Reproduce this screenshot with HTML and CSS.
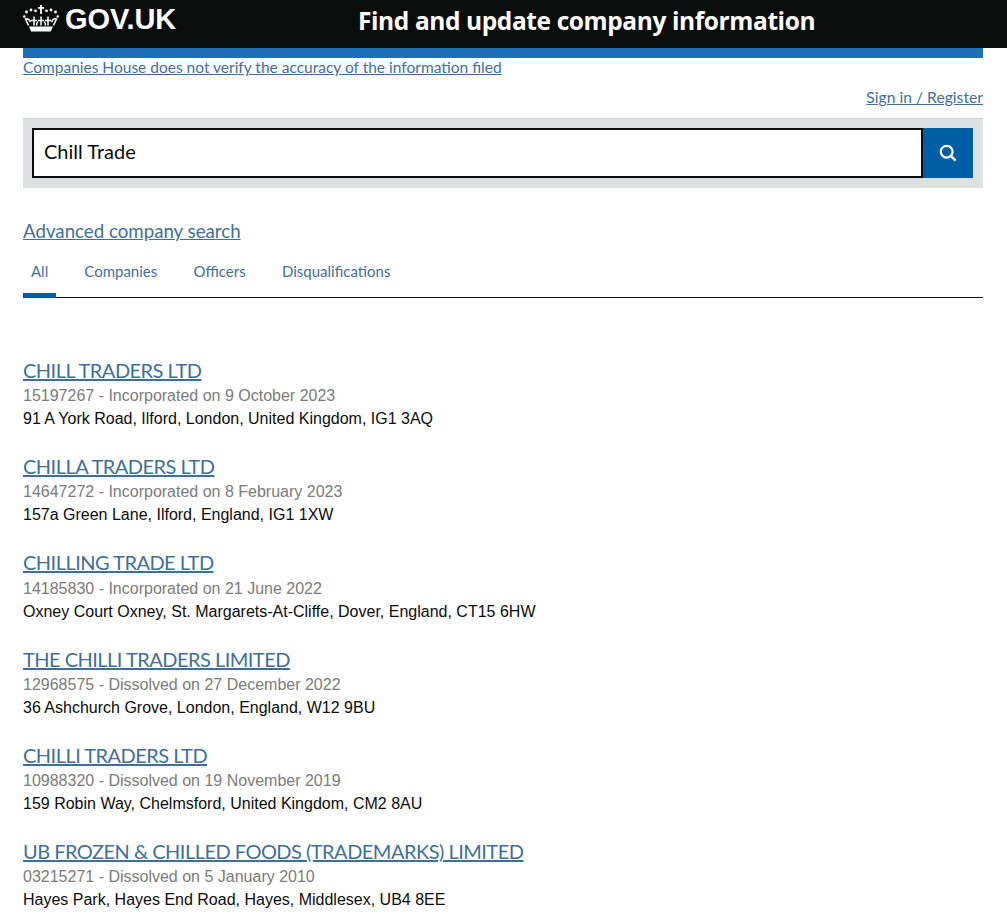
FILE: index.html
```html
<!DOCTYPE html>
<html lang="en">
<head>
<meta charset="utf-8">
<title>Find and update company information</title>
<link rel="stylesheet" href="styles.css">
</head>
<body>
<header class="masthead">
  <a class="logo" href="#">
    <svg class="crown" viewBox="0 0 36 28" width="36" height="28" aria-hidden="true">
      <g fill="#fff">
        <path d="M6 22.500h24l-2.200 5H8.200z"/>
        <rect x="17.100" y="1" width="1.800" height="9"/><rect x="15" y="3" width="6" height="1.800"/>
        <circle cx="12.500" cy="6.800" r="1.400"/><circle cx="23.500" cy="6.800" r="1.400"/>
        <circle cx="8" cy="6" r="1.400"/><circle cx="28" cy="6" r="1.400"/>
        <circle cx="3.500" cy="8" r="1.400"/><circle cx="32.500" cy="8" r="1.400"/>
        <circle cx="1.300" cy="12.500" r="1.200"/><circle cx="34.700" cy="12.500" r="1.200"/>
      </g>
      <g fill="none" stroke="#fff" stroke-width="1.500">
        <path d="M5.500 21.500 2.500 15c2-.5 4 .5 5 3M30.500 21.500l3-6.500c-2-.5-4 .5-5 3"/>
        <path d="M11 21.500v-9M25 21.500v-9M18 21.500v-9M8 16.500h6M22 16.500h6M15 16.500h6"/>
        <path d="M13.500 21.500c0-2 .5-3 1.500-4M22.500 21.500c0-2-.5-3-1.500-4"/>
      </g>
    </svg>
    <span class="logo-text">GOV.UK</span>
  </a>
  <a class="service" href="#">Find and update company information</a>
</header>

<div class="page">
  <div class="blue-bar"></div>
  <p class="notice"><a href="#">Companies House does not verify the accuracy of the information filed</a></p>
  <p class="signin"><a href="#">Sign in / Register</a></p>

  <form class="search">
    <div class="search-input">Chill Trade</div>
    <button class="search-btn" type="button" aria-label="Search">
      <svg viewBox="0 0 18 18" width="18" height="18" aria-hidden="true">
        <circle cx="7.700" cy="7.700" r="5.900" fill="none" stroke="#fff" stroke-width="2.200"/>
        <path d="M11.800 11.800l4.800 4.800" stroke="#fff" stroke-width="2.400" fill="none"/>
      </svg>
    </button>
  </form>

  <p class="advanced"><a href="#">Advanced company search</a></p>

  <nav class="tabs">
    <a class="tab active" href="#">All</a>
    <a class="tab" href="#">Companies</a>
    <a class="tab" href="#">Officers</a>
    <a class="tab" href="#">Disqualifications</a>
  </nav>

  <ul class="results">
    <li class="result">
      <h3><a href="#">CHILL TRADERS LTD</a></h3>
      <p class="meta">15197267 - Incorporated on 9 October 2023</p>
      <p class="addr">91 A York Road, Ilford, London, United Kingdom, IG1 3AQ</p>
    </li>
    <li class="result">
      <h3><a href="#">CHILLA TRADERS LTD</a></h3>
      <p class="meta">14647272 - Incorporated on 8 February 2023</p>
      <p class="addr">157a Green Lane, Ilford, England, IG1 1XW</p>
    </li>
    <li class="result">
      <h3><a href="#">CHILLING TRADE LTD</a></h3>
      <p class="meta">14185830 - Incorporated on 21 June 2022</p>
      <p class="addr">Oxney Court Oxney, St. Margarets-At-Cliffe, Dover, England, CT15 6HW</p>
    </li>
    <li class="result">
      <h3><a href="#">THE CHILLI TRADERS LIMITED</a></h3>
      <p class="meta">12968575 - Dissolved on 27 December 2022</p>
      <p class="addr">36 Ashchurch Grove, London, England, W12 9BU</p>
    </li>
    <li class="result">
      <h3><a href="#">CHILLI TRADERS LTD</a></h3>
      <p class="meta">10988320 - Dissolved on 19 November 2019</p>
      <p class="addr">159 Robin Way, Chelmsford, United Kingdom, CM2 8AU</p>
    </li>
    <li class="result">
      <h3><a href="#">UB FROZEN &amp; CHILLED FOODS (TRADEMARKS) LIMITED</a></h3>
      <p class="meta">03215271 - Dissolved on 5 January 2010</p>
      <p class="addr">Hayes Park, Hayes End Road, Hayes, Middlesex, UB4 8EE</p>
    </li>
  </ul>
</div>
</body>
</html>
```

FILE: styles.css
```css
* { box-sizing: border-box; }
html, body { margin: 0; padding: 0; }
body {
  height: 922px;
  overflow: hidden;
  background: #fff;
  color: #0b0c0c;
  font-family: Lato, "Open Sans", sans-serif;
}
a { color: #3f7099; }
p, h3, ul { margin: 0; padding: 0; }

.masthead {
  height: 48px;
  background: #0b0c0c;
  display: flex;
  padding-left: 23px;
}
.masthead a { color: #fff; text-decoration: none; font-family: "Liberation Sans", Arial, sans-serif; font-weight: 700; }
.logo { display: flex; align-items: flex-start; width: 335px; }
.crown { margin-top: 4px; }
.logo-text { font-size: 29px; line-height: 38px; margin-left: 6px; letter-spacing: -0.1px; }
.masthead .service { font-family: "Open Sans", sans-serif; font-size: 24.5px; line-height: 42px; letter-spacing: -0.4px; }

.page { padding: 0 24px 0 23px; }
.blue-bar { height: 10px; background: #1d70b8; }
.notice { font-size: 15.5px; line-height: 19px; }
.signin { font-size: 15.7px; line-height: 20px; text-align: right; margin-top: 10px; }

.search {
  display: flex;
  height: 70px;
  margin-top: 11px;
  padding: 9px 10px 10px 9px;
  background: #dee0e2;
  border-top: 1px solid #cfd1d3;
}
.search-input {
  flex: 1;
  background: #fff;
  border: 2px solid #0b0c0c;
  padding: 0 10px;
  font-size: 20px;
  line-height: 42px;
}
.search-btn {
  width: 50px;
  border: 0;
  padding: 0;
  background: #005ea5;
  display: flex;
  align-items: center;
  justify-content: center;
}

.advanced { font-size: 18.7px; line-height: 24px; margin-top: 31px; }

.tabs {
  display: flex;
  margin-top: 8px;
  border-bottom: 1px solid #0b0c0c;
  height: 47px;
}
.tab {
  font-size: 15px;
  line-height: 20px;
  padding: 10px 8px 0;
  margin-right: 20.300px;
  text-decoration: none;
  height: 47px;
}
.tab.active { border-bottom: 5px solid #005ea5; width: 33px; padding: 10px 0 0 8px; }

.results { list-style: none; margin-top: 60.800px; }
.result { height: 96.300px; }
.result h3 { font-size: 20px; font-weight: 400; line-height: 23px; letter-spacing: -0.52px; margin-bottom: 2.200px; }
.meta, .addr { font-family: "Liberation Sans", Arial, sans-serif; font-size: 16px; line-height: 23px; }
.meta { color: #7b7b7b; }
.addr { color: #0b0c0c; }
```
